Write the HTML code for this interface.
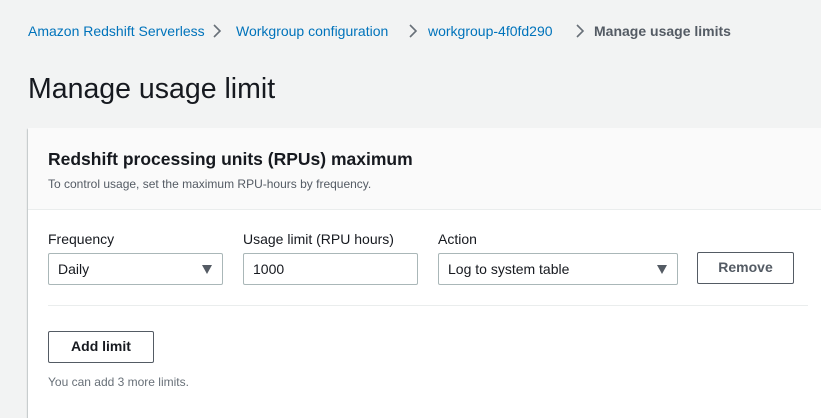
<!DOCTYPE html>
<html><head><meta charset="utf-8"><style>
*{box-sizing:border-box;margin:0;padding:0}
body{width:821px;height:407px;overflow:hidden;background:#f2f3f3;font-family:"Liberation Sans",sans-serif;color:#16191f;position:relative}
.a{position:absolute;white-space:nowrap}
.bc{top:23px;font-size:14px;color:#0073bb}
.chev{top:22px;width:14px;height:18px}
.card{position:absolute;left:28px;top:128px;width:800px;height:290px;background:#fff;box-shadow:0 1px 1px rgba(0,28,36,.3),1px 1px 1px rgba(0,28,36,.15),-1px 1px 1px rgba(0,28,36,.15)}
.hd{position:absolute;left:0;top:0;right:0;height:82px;background:#fafafa;border-bottom:1px solid #eaeded}
.lab{top:231px;font-size:14px}
.box{position:absolute;top:253px;height:32px;border:1px solid #aab7b8;background:#fff;font-size:14px;padding:7px 9px;border-radius:2px}
.tri{position:absolute;right:10px;top:11px;width:0;height:0;border-left:5px solid transparent;border-right:5px solid transparent;border-top:9px solid #545b64}
.btn{position:absolute;border:1px solid #545b64;border-radius:2px;background:#fff;font-weight:bold;font-size:14px;color:#545b64;text-align:center;line-height:29px}
</style></head><body>
<div class="a bc" style="left:28px">Amazon Redshift Serverless</div>
<svg class="a chev" style="left:210px" viewBox="0 0 14 18"><path d="M4 3l6 6-6 6" fill="none" stroke="#687078" stroke-width="1.6"/></svg>
<div class="a bc" style="left:236px">Workgroup configuration</div>
<svg class="a chev" style="left:406px" viewBox="0 0 14 18"><path d="M4 3l6 6-6 6" fill="none" stroke="#687078" stroke-width="1.6"/></svg>
<div class="a bc" style="left:428px">workgroup-4f0fd290</div>
<svg class="a chev" style="left:573px" viewBox="0 0 14 18"><path d="M4 3l6 6-6 6" fill="none" stroke="#687078" stroke-width="1.6"/></svg>
<div class="a" style="left:594px;top:23px;font-size:14px;font-weight:bold;color:#545b64">Manage usage limits</div>
<div class="a" style="left:28px;top:73px;font-size:28.5px">Manage usage limit</div>
<div class="card"><div class="hd"></div></div>
<div class="a" style="left:48px;top:149px;font-size:17.5px;font-weight:bold">Redshift processing units (RPUs) maximum</div>
<div class="a" style="left:48px;top:177px;font-size:12px;color:#545b64">To control usage, set the maximum RPU-hours by frequency.</div>
<div class="a lab" style="left:48px">Frequency</div>
<div class="a lab" style="left:243px">Usage limit (RPU hours)</div>
<div class="a lab" style="left:438px">Action</div>
<div class="box" style="left:48px;width:175px">Daily<span class="tri"></span></div>
<div class="box" style="left:243px;width:175px">1000</div>
<div class="box" style="left:438px;width:240px">Log to system table<span class="tri"></span></div>
<div class="btn" style="left:697px;top:252px;width:97px;height:32px">Remove</div>
<div class="a" style="left:48px;top:305px;width:760px;height:1px;background:#eaeded"></div>
<div class="btn" style="left:48px;top:331px;width:106px;height:32px;color:#16191f">Add limit</div>
<div class="a" style="left:48px;top:375px;font-size:12px;color:#687078">You can add 3 more limits.</div>
</body></html>
